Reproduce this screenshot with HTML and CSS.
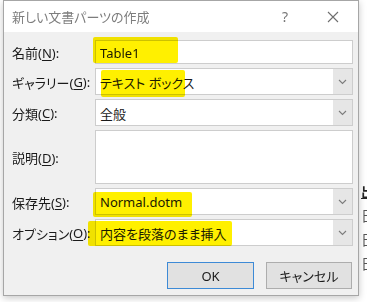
FILE: index.html
```html
<!DOCTYPE html>
<html lang="ja">
<head>
    <meta charset="UTF-8">
    <title>新しい文書パーツの作成</title>
    <link rel="stylesheet" href="styles.css">
</head>
<body>
    <div class="screen">
        <div class="dialog">
            <div class="titlebar">
                <span class="title">新しい文書パーツの作成</span>
                <span class="help">?</span>
                <span class="close">
                    <svg width="12" height="12" viewBox="0 0 12 12">
                        <path d="M1 1 L11 11 M11 1 L1 11" stroke="#6e6e6e" stroke-width="1.1" fill="none"/>
                    </svg>
                </span>
            </div>

            <div class="content">
                <div class="form">
                    <div class="label">名前(<u>N</u>):</div>
                    <div class="field">
                        <span class="value">Table1</span>
                        <span class="hl hl-name"></span>
                    </div>

                    <div class="label">ギャラリー(<u>G</u>):</div>
                    <div class="field">
                        <span class="value">テキスト ボックス</span>
                        <span class="drop"><svg width="9" height="6" viewBox="0 0 9 6"><path d="M1 1 L4.5 4.5 L8 1" stroke="#7c7c7c" stroke-width="1.1" fill="none"/></svg></span>
                        <span class="hl hl-gallery"></span>
                    </div>

                    <div class="label">分類(<u>C</u>):</div>
                    <div class="field">
                        <span class="value">全般</span>
                        <span class="drop"><svg width="9" height="6" viewBox="0 0 9 6"><path d="M1 1 L4.5 4.5 L8 1" stroke="#7c7c7c" stroke-width="1.1" fill="none"/></svg></span>
                    </div>

                    <div class="label">説明(<u>D</u>):</div>
                    <div class="field field-area"></div>

                    <div class="label">保存先(<u>S</u>):</div>
                    <div class="field">
                        <span class="value">Normal.dotm</span>
                        <span class="drop"><svg width="9" height="6" viewBox="0 0 9 6"><path d="M1 1 L4.5 4.5 L8 1" stroke="#7c7c7c" stroke-width="1.1" fill="none"/></svg></span>
                        <span class="hl hl-save"></span>
                    </div>

                    <div class="label">オプション(<u>O</u>):</div>
                    <div class="field">
                        <span class="value">内容を段落のまま挿入</span>
                        <span class="drop"><svg width="9" height="6" viewBox="0 0 9 6"><path d="M1 1 L4.5 4.5 L8 1" stroke="#7c7c7c" stroke-width="1.1" fill="none"/></svg></span>
                        <span class="hl hl-option"></span>
                    </div>
                </div>

                <div class="buttons">
                    <button class="btn btn-default">OK</button>
                    <button class="btn btn-cancel">キャンセル</button>
                </div>
            </div>
        </div>

        <div class="behind">
            <span class="mark-u">出</span>
            <span>日</span>
            <span>日</span>
            <span>日</span>
        </div>
    </div>
</body>
</html>
```

FILE: styles.css
```css
* {
    margin: 0;
    padding: 0;
    box-sizing: border-box;
}

html, body {
    width: 367px;
    height: 302px;
    overflow: hidden;
    background: #ffffff;
}

body {
    font-family: "Noto Sans", "Noto Sans CJK JP", sans-serif;
    font-feature-settings: "palt";
    font-size: 13px;
    color: #1a1a1a;
}

.screen {
    display: flex;
    align-items: flex-start;
    padding-left: 3px;
}

.dialog {
    width: 356px;
    height: 296px;
    border: 1px solid #a6a6a6;
    background: #f0f0f0;
    box-shadow: 0 2px 7px rgba(0, 0, 0, 0.22);
    display: flex;
    flex-direction: column;
}

/* barre de titre */
.titlebar {
    height: 31px;
    background: #ffffff;
    display: flex;
    align-items: center;
    padding-left: 8px;
}

.title {
    color: #7d7d7d;
    font-size: 13px;
    flex: 1;
}

.help {
    color: #777;
    font-size: 14px;
    width: 14px;
    text-align: center;
    margin-right: 35px;
}

.close {
    display: flex;
    width: 12px;
    margin-right: 19px;
}

.content {
    padding: 8px 5px 6px 8px;
    flex: 1;
    display: flex;
    flex-direction: column;
}

.form {
    display: grid;
    grid-template-columns: 83px 258px;
    grid-template-rows: 24px 27px 27px 54px 27px 27px;
    row-gap: 4px;
}

.label {
    display: flex;
    align-items: center;
    padding-top: 1px;
}

.label u {
    text-underline-offset: 2px;
}

.field {
    position: relative;
    background: #ffffff;
    border: 1px solid #cdcdcd;
    display: flex;
    align-items: center;
}

.value {
    flex: 1;
    padding-left: 4px;
    padding-top: 1px;
    white-space: nowrap;
}

.drop {
    align-self: stretch;
    width: 19px;
    background: #e6e6e6;
    display: flex;
    align-items: center;
    justify-content: center;
}

/* surlignage jaune par-dessus la capture */
.hl {
    position: absolute;
    background: #fff000;
    mix-blend-mode: multiply;
    border-radius: 2px;
}

.hl-name {
    left: -3px;
    top: -4px;
    width: 85px;
    height: 26px;
}

.hl-gallery {
    left: 5px;
    top: 1px;
    width: 84px;
    height: 27px;
}

.hl-save {
    left: -3px;
    top: 3px;
    width: 99px;
    height: 25px;
}

.hl-option {
    left: -8px;
    top: 1px;
    width: 144px;
    height: 25px;
}

.buttons {
    margin-top: 16px;
    display: flex;
    justify-content: flex-end;
    gap: 12px;
    padding-right: 1px;
}

.btn {
    height: 27px;
    background: #e1e1e1;
    border: 1px solid #adadad;
    font-family: inherit;
    font-feature-settings: "palt";
    font-size: 13px;
    color: #1a1a1a;
}

.btn-default {
    width: 87px;
    border-color: #3d8ad6;
}

.btn-cancel {
    width: 86px;
}

.behind {
    margin-left: 2px;
    padding-top: 180px;
    display: flex;
    flex-direction: column;
    font-size: 14px;
    line-height: 24px;
    color: #555;
}

.mark-u {
    text-decoration: underline;
    color: #222;
    font-weight: bold;
}
```
